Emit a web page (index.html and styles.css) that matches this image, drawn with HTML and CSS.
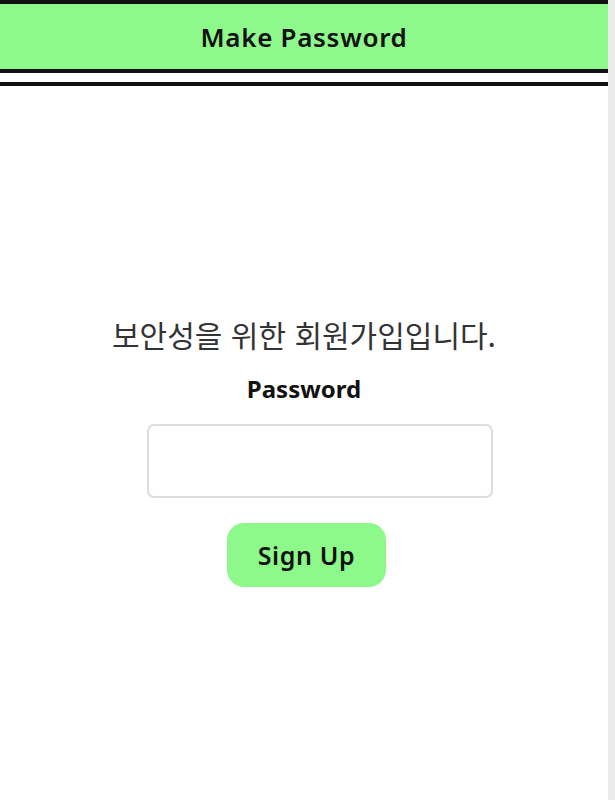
FILE: index.html
```html
<!DOCTYPE html>
<html lang="ko">
<head>
<meta charset="utf-8">
<title>Make Password</title>
<link rel="stylesheet" href="styles.css">
</head>
<body>
<div class="page">
  <header class="topbar">
    <h1 class="topbar-title">Make Password</h1>
  </header>
  <div class="rule"></div>
  <main class="content">
    <p class="intro">보안성을 위한 회원가입입니다.</p>
    <label class="field-label" for="pw">Password</label>
    <input class="field-input" id="pw" type="password">
    <button class="signup-btn" type="button">Sign Up</button>
  </main>
</div>
</body>
</html>
```

FILE: styles.css
```css
html {
  background: #ebebeb;
}
body {
  margin: 0;
  font-family: "Noto Sans", "Noto Sans CJK KR", sans-serif;
}
.page {
  width: 608px;
  min-height: 800px;
  background: #ffffff;
}
.topbar {
  background: #8cf98a;
  border-top: 4px solid #111;
  border-bottom: 4px solid #111;
  height: 65px;
  display: flex;
  align-items: center;
  justify-content: center;
}
.topbar-title {
  margin: 0;
  font-size: 26px;
  font-weight: 600;
  color: #111;
  letter-spacing: 0.7px;
}
.rule {
  margin-top: 9px;
  height: 4px;
  background: #111;
}
.content {
  display: flex;
  flex-direction: column;
  align-items: center;
  padding-top: 228px;
}
.intro {
  margin: 0;
  font-family: "Noto Sans CJK KR", sans-serif;
  font-size: 30px;
  line-height: 40px;
  color: #333;
  font-weight: 400;
}
.field-label {
  margin-top: 20px;
  font-size: 24px;
  font-weight: 700;
  color: #111;
  line-height: 30px;
}
.field-input {
  margin-top: 20px;
  margin-left: 32px;
  width: 346px;
  height: 74px;
  box-sizing: border-box;
  border: 2px solid #dddddd;
  border-radius: 7px;
  background: #fff;
  outline: none;
}
.signup-btn {
  margin-top: 25px;
  margin-left: 5px;
  width: 159px;
  height: 64px;
  border: none;
  border-radius: 17px;
  background: #8cf98a;
  font-family: "Noto Sans", sans-serif;
  font-size: 25px;
  font-weight: 600;
  color: #111;
  letter-spacing: 0.6px;
  cursor: pointer;
}
```
